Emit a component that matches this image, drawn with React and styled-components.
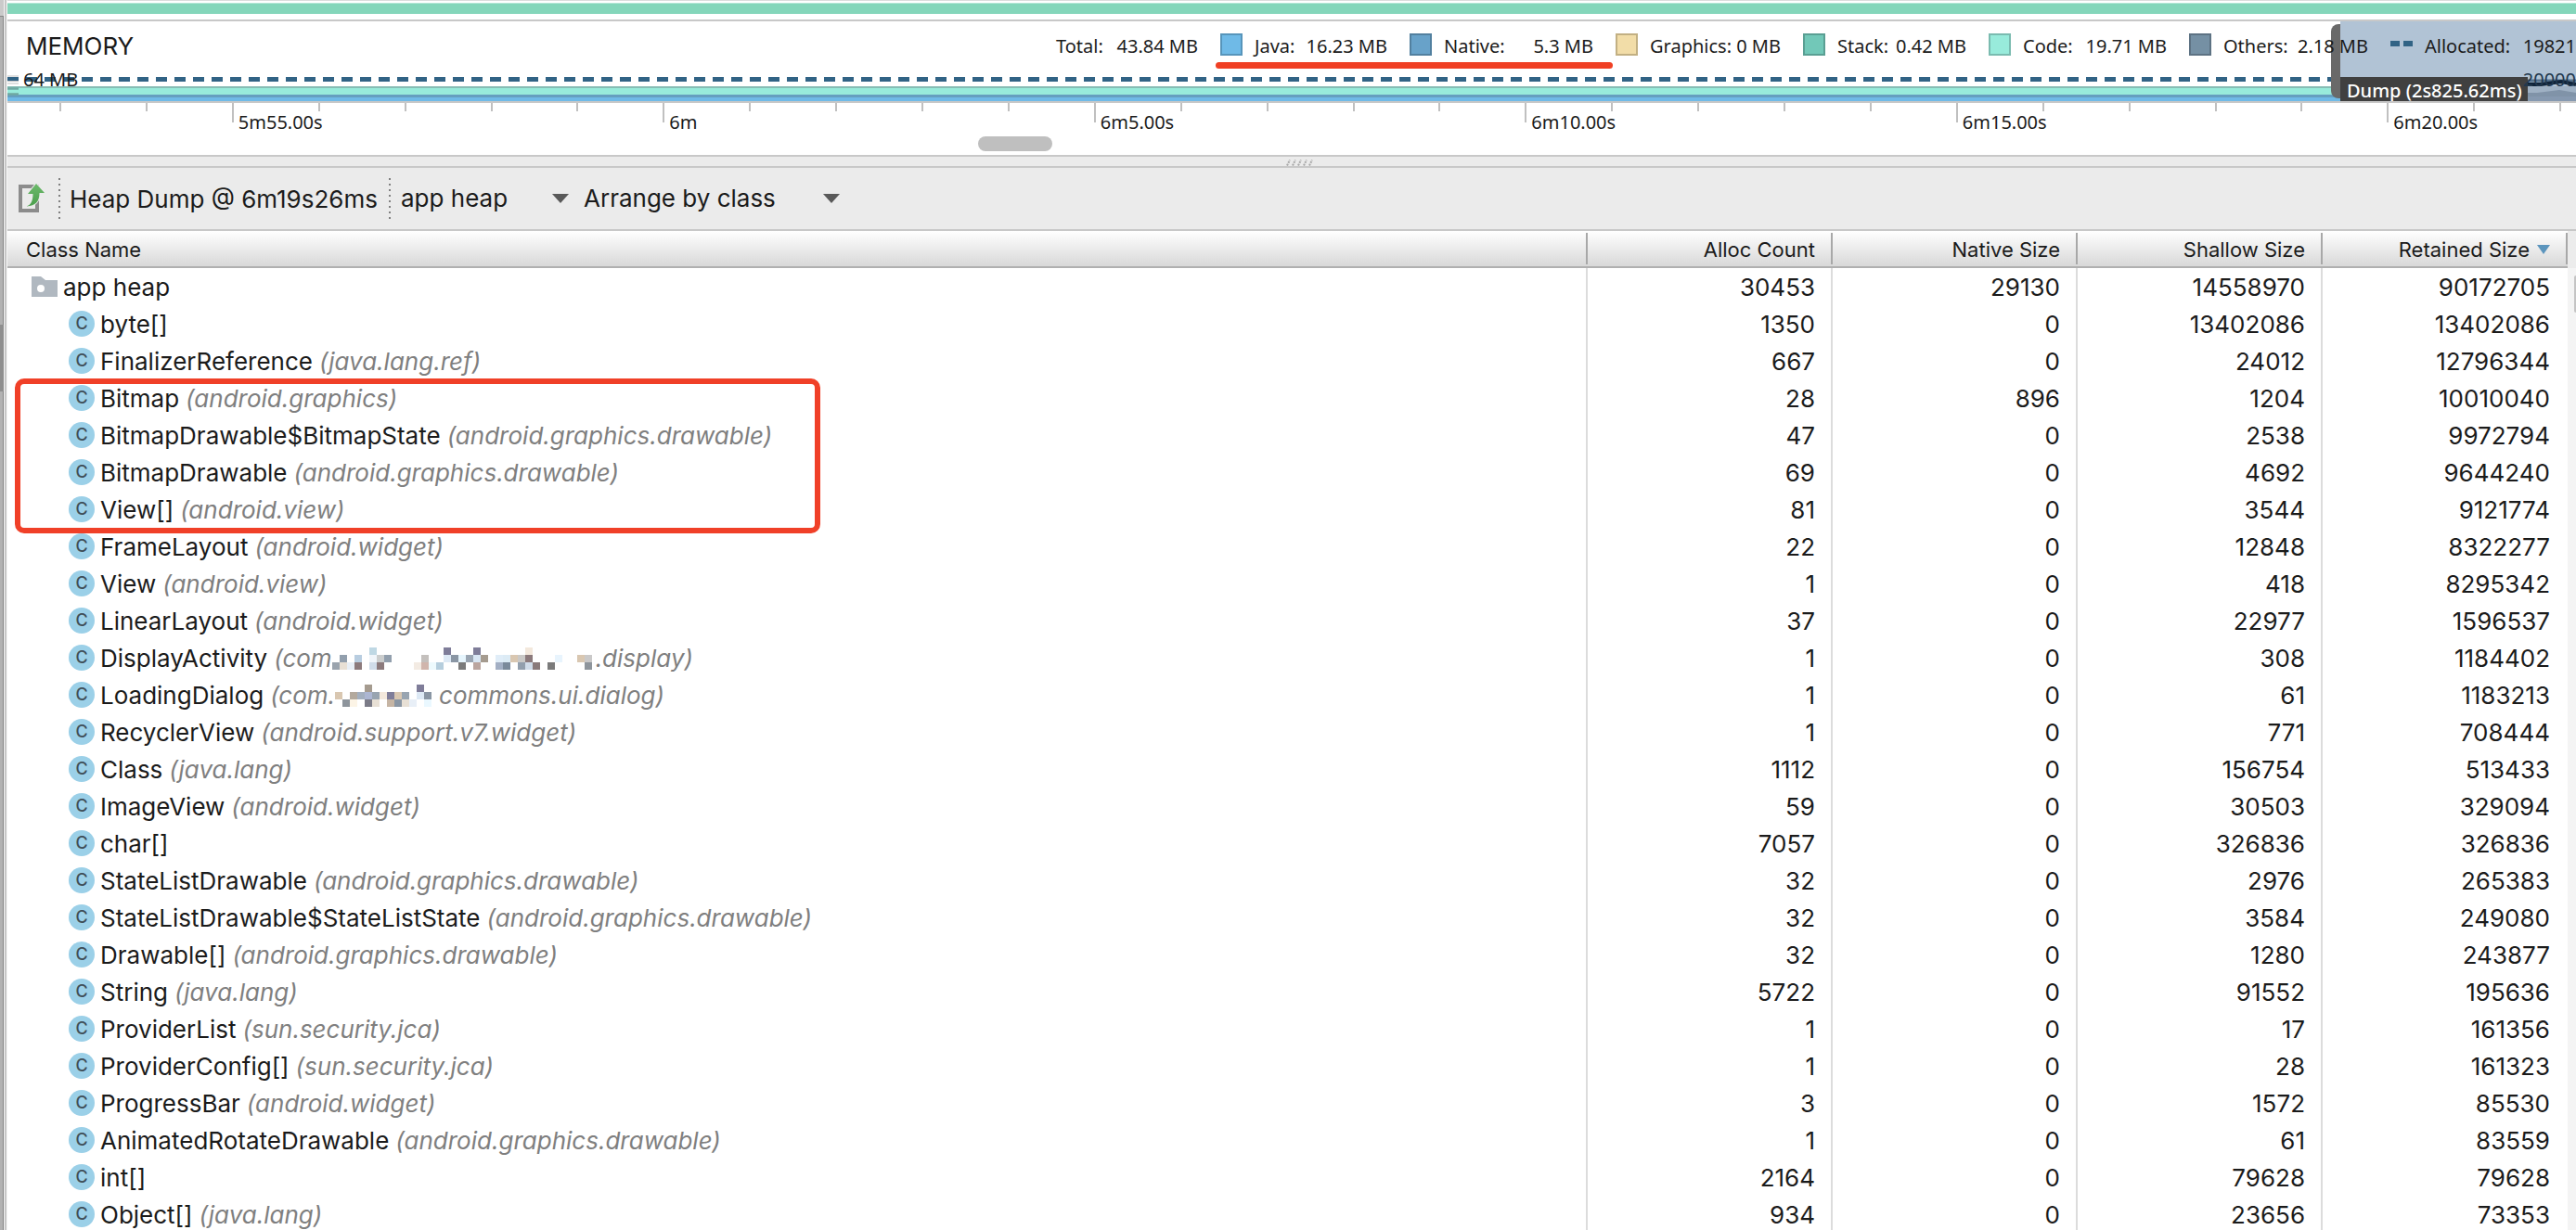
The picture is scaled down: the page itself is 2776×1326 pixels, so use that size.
import React from "react";
import styled, { createGlobalStyle } from "styled-components";

const GlobalStyle = createGlobalStyle`
  * { box-sizing: border-box; }
  body {
    margin: 0;
    overflow: hidden;
    background: #ffffff;
    color: #1b1b1b;
    font-family: Inter, "Liberation Sans", sans-serif;
    font-size: 26px;
  }
`;

const chartFont = `"Noto Sans", "Open Sans", sans-serif`;

const Page = styled.div`
  display: flex;
  height: 100vh;
  overflow: hidden;
`;

const Gutter = styled.aside`
  flex: 0 0 8px;
  display: flex;
  flex-direction: column;
  background: linear-gradient(to right, #b2b2b2 0 3px, #858585 3px 4px, #f2f2f2 4px 5px, #c6c6c6 5px 7px, #f6f6f6 7px 8px);
`;

const GutterPart = styled.div`
  width: 4px;
  height: ${(p) => p.$height}px;
  background: ${(p) => p.$color};
`;

const Main = styled.main`
  flex: 1;
  min-width: 0;
  display: flex;
  flex-direction: column;
`;

const NetworkStrip = styled.div`
  height: 23px;
  flex: none;
  padding-top: 2px;
  border-top: 1px solid #dcdcdc;
  border-bottom: 2px solid #c8c8c8;
`;

const NetworkBand = styled.div`
  height: 12px;
  background: #84d6ba;
  border-top: 1px solid #b4e6d6;
`;

const MemoryPanel = styled.section`
  position: relative;
  flex: none;
  overflow: hidden;
  border-bottom: 2px solid #c8c8c8;
`;

const MemoryHeader = styled.header`
  position: relative;
  z-index: 2;
  display: flex;
  align-items: center;
  justify-content: space-between;
  height: 52px;
  padding: 2px 0 0 20px;
`;

const Title = styled.h1`
  margin: 0;
  font-size: 26px;
  line-height: 32px;
  font-weight: 400;
`;

const Legend = styled.ul`
  display: flex;
  flex: 0 0 1638px;
  margin: 0;
  padding: 0;
  list-style: none;
  white-space: nowrap;
  font-family: ${chartFont};
  font-size: 20px;
  line-height: 28px;
`;

const LegendItem = styled.li`
  flex: 0 0 ${(p) => p.$width}px;
  display: flex;
  align-items: center;
  justify-content: space-between;
  padding-right: ${(p) => (p.$last ? 0 : 24)}px;
`;

const LegendLabel = styled.span`
  display: flex;
  align-items: center;
  gap: 13px;
`;

const Swatch = styled.span`
  width: 24px;
  height: 24px;
  margin-bottom: 4px;
  background: ${(p) => p.$fill};
  border: 2px solid ${(p) => p.$edge};
`;

const DashSwatch = styled.span`
  width: 24px;
  height: 6px;
  margin-bottom: 6px;
  background: linear-gradient(to right, #316385 0 10px, transparent 10px 14px, #316385 14px 24px);
`;

const Underline = styled.div`
  position: absolute;
  z-index: 2;
  top: 44px;
  right: 1038px;
  width: 428px;
  height: 7px;
  border-radius: 4px;
  background: #f04024;
`;

const AllocatedLine = styled.div`
  height: 5px;
  margin: 8px 0 5px;
  background: repeating-linear-gradient(to right, #316385 0 12px, transparent 12px 20px);
`;

const CodeBand = styled.div`
  height: 9px;
  background: #98ebdb;
  border-top: 2px solid #86bdb5;
`;

const JavaBand = styled.div`
  height: 7px;
  background: #6fbae7;
  border-top: 3px solid #659fbf;
`;

const AxisMarks = styled.svg`
  position: absolute;
  left: 0;
  bottom: 0;
  width: 12px;
  height: 28px;
`;

const AxisLabel = styled.span`
  position: absolute;
  z-index: 2;
  bottom: 10px;
  ${(p) => (p.$end ? "right: 0; color: #22384e;" : "left: 17px;")}
  font-family: ${chartFont};
  font-size: 20px;
  line-height: 26px;
`;

const Selection = styled.div`
  position: absolute;
  top: 0;
  right: 0;
  bottom: 0;
  width: 254px;
  display: flex;
  align-items: flex-end;
  background: #b1c3d5;
`;

const Handle = styled.div`
  position: absolute;
  top: 3px;
  left: -10px;
  width: 10px;
  height: 80px;
  border-radius: 8px 0 0 8px;
  background: #696969;
`;

const DumpTag = styled.div`
  width: 202px;
  height: 26px;
  padding-left: 7px;
  background: #404040;
  color: #ffffff;
  font-family: ${chartFont};
  font-size: 20px;
  font-weight: 500;
  line-height: 30px;
  white-space: nowrap;
`;

const Ruler = styled.div`
  display: grid;
  flex: none;
  grid-template-columns: 560fr repeat(29, minmax(0, 929fr)) 179fr;
  height: 34px;
`;

const Tick = styled.div`
  grid-column-start: ${(p) => p.$column};
  height: ${(p) => (p.$major ? 21 : 9)}px;
  padding: 8px 0 0 5px;
  border-left: 2px solid #c0c0c0;
  font-family: ${chartFont};
  font-size: 20px;
  line-height: 26px;
  white-space: nowrap;
`;

const ScrollTrack = styled.div`
  flex: none;
  height: 24px;
  padding: 2px 0 0 1046px;
  border-bottom: 2px solid #c8c8c8;
`;

const ScrollThumb = styled.div`
  width: 80px;
  height: 16px;
  border-radius: 8px;
  background: #bfbfbf;
`;

const Splitter = styled.div`
  flex: none;
  display: flex;
  justify-content: center;
  height: 12px;
  padding: 3px 0 0 18px;
  background: #ebebeb;
  border-bottom: 2px solid #c8c8c8;
`;

const Toolbar = styled.div`
  flex: none;
  display: flex;
  align-items: center;
  height: 68px;
  padding-left: 12px;
  background: #ebebeb;
  border-bottom: 2px solid #c8c8c8;
  font-size: 26px;
  white-space: nowrap;
`;

const IconButton = styled.button`
  display: flex;
  width: 43px;
  padding: 0;
  border: 0;
  background: none;
`;

const Divider = styled.span`
  width: 2px;
  height: 44px;
  background: repeating-linear-gradient(to bottom, #808080 0 2px, transparent 2px 6px);
`;

const DumpName = styled.span`
  width: 354px;
  padding-left: 10px;
`;

const Picker = styled.label`
  display: flex;
  align-items: center;
  width: ${(p) => p.$width}px;
  margin-left: ${(p) => p.$gap}px;
`;

const PickerSelect = styled.select`
  flex: 1;
  min-width: 0;
  padding: 0;
  border: 0;
  appearance: none;
  background: none;
  color: inherit;
  font: inherit;
  line-height: 34px;
`;

const TableArea = styled.div`
  position: relative;
  flex: 1;
  min-height: 0;
  display: flex;
  overflow: hidden;
`;

const ClassTable = styled.table`
  flex: 1;
  width: 100%;
  table-layout: fixed;
  border-collapse: separate;
  border-spacing: 0;
  height: max-content;
`;

const NameCol = styled.col``;

const NumberCol = styled.col`
  width: 264px;
`;

const HeadCell = styled.th`
  height: 40px;
  padding: 2px 19px 0 20px;
  font-size: 22px;
  font-weight: 400;
  line-height: 28px;
  text-align: ${(p) => (p.$numeric ? "right" : "left")};
  white-space: nowrap;
  border-bottom: 2px solid #b0b0b0;
  background:
    linear-gradient(#a8a8a8, #a8a8a8) right 2px / 2px 34px no-repeat,
    linear-gradient(to bottom, #ffffff, #d8d8d8);
`;

const SortArrow = styled.svg`
  width: 14px;
  height: 10px;
  margin-left: 8px;
  vertical-align: 3px;
`;

const NameCell = styled.td`
  height: 40px;
  padding: 0 0 0 ${(p) => (p.$root ? 26 : 66)}px;
  border-right: 2px solid #dcdcdc;
`;

const NameLine = styled.div`
  display: flex;
  align-items: center;
  gap: 6px;
  height: 40px;
  line-height: 32px;
  font-size: 26px;
  white-space: nowrap;
`;

const ClassName = styled.span`
  padding-top: 1px;
`;

const PackageName = styled.em`
  display: flex;
  align-items: center;
  padding: 1px 0 0 1px;
  color: #7f7f7f;
`;

const ClassBadge = styled.span`
  display: grid;
  place-items: center;
  width: 28px;
  height: 28px;
  border-radius: 50%;
  background: #9bd0e8;
  color: #3f4f58;
  font-size: 18px;
  font-weight: 500;
  line-height: 28px;
`;

const NumberCell = styled.td`
  height: 40px;
  padding: 1px ${(p) => (p.$last ? 19 : 17)}px 0 0;
  border-right: ${(p) => (p.$last ? "0" : "2px solid #dcdcdc")};
  text-align: right;
  font-size: 26px;
  line-height: 32px;
`;

const SideTrack = styled.div`
  flex: 0 0 9px;
  display: flex;
  justify-content: flex-end;
  padding-top: 48px;
  background: linear-gradient(to bottom, #ececec 0 40px, #f4f4f4 40px);
`;

const SideThumb = styled.div`
  width: 2px;
  height: 40px;
  border-radius: 2px 0 0 2px;
  background: #c4c4c4;
`;

const Highlight = styled.div`
  position: absolute;
  top: 159px;
  left: 8px;
  width: 868px;
  height: 167px;
  border: 6px solid #f04028;
  border-radius: 10px;
  pointer-events: none;
`;

const legend = [
  { label: "Total:", value: "43.84 MB", width: 177 },
  { label: "Java:", value: "16.23 MB", width: 204, fill: "#6fbae7", edge: "#5795bb" },
  { label: "Native:", value: "5.3 MB", width: 222, fill: "#68a2c9", edge: "#52809f" },
  { label: "Graphics:", value: "0 MB", width: 202, fill: "#f2dda8", edge: "#c2b083" },
  { label: "Stack:", value: "0.42 MB", width: 200, fill: "#72c8b8", edge: "#5a9f93" },
  { label: "Code:", value: "19.71 MB", width: 216, fill: "#98ebdb", edge: "#7abbb0" },
  { label: "Others:", value: "2.18 MB", width: 217, fill: "#7590a4", edge: "#5d7283" },
  { label: "Allocated:", value: "19821", width: 200, dashed: true },
];

const tickLabels = { 2: "5m55.00s", 7: "6m", 12: "6m5.00s", 17: "6m10.00s", 22: "6m15.00s", 27: "6m20.00s" };
const ticks = Array.from({ length: 30 }, (_, i) => i);

// Redacted parts of package names: [column, row, colour] on an 8px grid.
const maskActivity = {
  width: 284,
  cells: [
    [5, 0, "#bfd8e4"], [15, 0, "#7f7d99"], [19, 0, "#7f7d99"], [26, 0, "#f3e8dc"],
    [1, 1, "#929fad"], [3, 1, "#b8cde0"], [5, 1, "#f0f5fa"], [6, 1, "#cbcdcd"], [7, 1, "#929fad"], [12, 1, "#c4c0bd"],
    [15, 1, "#dde9f5"], [16, 1, "#8a96a4"], [17, 1, "#e6f5fd"], [18, 1, "#9aa5b2"], [19, 1, "#d8e6f3"], [20, 1, "#a59b8f"],
    [22, 1, "#e0edf8"], [23, 1, "#dcebf5"], [24, 1, "#d9c7b1"], [25, 1, "#cac9c7"], [26, 1, "#8c7a7c"], [30, 1, "#e8f4fd"],
    [33, 1, "#d9c7b1"], [34, 1, "#cac9c9"],
    [0, 2, "#9aa4ae"], [1, 2, "#e8e0d5"], [2, 2, "#e8eff7"], [3, 2, "#8c7a7c"], [5, 2, "#d0dce9"], [6, 2, "#8c7a7c"],
    [11, 2, "#f3ebe3"], [12, 2, "#d0b5ac"], [13, 2, "#eefafd"], [14, 2, "#b6cedd"], [17, 2, "#7b7b7b"], [19, 2, "#bba59e"],
    [22, 2, "#a3afc4"], [23, 2, "#7b8a9b"], [25, 2, "#929fad"], [26, 2, "#d0dce9"], [27, 2, "#8a7a7a"], [29, 2, "#7b7b7b"],
    [34, 2, "#8e959c"],
  ],
};
const maskDialog = {
  width: 112,
  cells: [
    [4, 0, "#a59b8f"], [11, 0, "#7f7d99"],
    [0, 1, "#d9c7b1"], [2, 1, "#b3a99d"], [3, 1, "#a3afbf"], [4, 1, "#acb6d2"], [5, 1, "#98a4b0"], [6, 1, "#f3e8dc"],
    [7, 1, "#7f7d99"], [8, 1, "#d9c7b1"], [9, 1, "#98a4b0"], [11, 1, "#dde9f5"], [12, 1, "#8a96a4"],
    [1, 2, "#8e959c"], [2, 2, "#fcf4e6"], [4, 2, "#7b7b87"], [5, 2, "#e8e0d5"], [7, 2, "#c6b5a4"], [8, 2, "#8a96a4"],
    [9, 2, "#e8e0d5"], [10, 2, "#e8eff7"], [12, 2, "#eaf8ff"],
  ],
};

const rows = [
  ["byte[]", null, 1350, 0, 13402086, 13402086],
  ["FinalizerReference", "(java.lang.ref)", 667, 0, 24012, 12796344],
  ["Bitmap", "(android.graphics)", 28, 896, 1204, 10010040],
  ["BitmapDrawable$BitmapState", "(android.graphics.drawable)", 47, 0, 2538, 9972794],
  ["BitmapDrawable", "(android.graphics.drawable)", 69, 0, 4692, 9644240],
  ["View[]", "(android.view)", 81, 0, 3544, 9121774],
  ["FrameLayout", "(android.widget)", 22, 0, 12848, 8322277],
  ["View", "(android.view)", 1, 0, 418, 8295342],
  ["LinearLayout", "(android.widget)", 37, 0, 22977, 1596537],
  ["DisplayActivity", ["(com", maskActivity, ".display)"], 1, 0, 308, 1184402],
  ["LoadingDialog", ["(com.", maskDialog, "commons.ui.dialog)"], 1, 0, 61, 1183213],
  ["RecyclerView", "(android.support.v7.widget)", 1, 0, 771, 708444],
  ["Class", "(java.lang)", 1112, 0, 156754, 513433],
  ["ImageView", "(android.widget)", 59, 0, 30503, 329094],
  ["char[]", null, 7057, 0, 326836, 326836],
  ["StateListDrawable", "(android.graphics.drawable)", 32, 0, 2976, 265383],
  ["StateListDrawable$StateListState", "(android.graphics.drawable)", 32, 0, 3584, 249080],
  ["Drawable[]", "(android.graphics.drawable)", 32, 0, 1280, 243877],
  ["String", "(java.lang)", 5722, 0, 91552, 195636],
  ["ProviderList", "(sun.security.jca)", 1, 0, 17, 161356],
  ["ProviderConfig[]", "(sun.security.jca)", 1, 0, 28, 161323],
  ["ProgressBar", "(android.widget)", 3, 0, 1572, 85530],
  ["AnimatedRotateDrawable", "(android.graphics.drawable)", 1, 0, 61, 83559],
  ["int[]", null, 2164, 0, 79628, 79628],
  ["Object[]", "(java.lang)", 934, 0, 23656, 73353],
];

function Mask({ mask }) {
  return (
    <svg width={mask.width} height="24" aria-hidden="true" shapeRendering="crispEdges">
      {mask.cells.map(([x, y, fill]) => (
        <rect key={`${x}-${y}`} x={x * 8} y={y * 8} width="8" height="8" fill={fill} />
      ))}
    </svg>
  );
}

function Package({ value }) {
  if (!value) return null;
  if (typeof value === "string") return <PackageName>{value}</PackageName>;
  const [before, mask, after] = value;
  return (
    <PackageName>
      {before}
      <Mask mask={mask} />
      {after}
    </PackageName>
  );
}

function Numbers({ values }) {
  return values.map((value, i) => (
    <NumberCell key={i} $last={i === values.length - 1}>{value}</NumberCell>
  ));
}

function DownArrow() {
  return (
    <svg width="18" height="10" viewBox="0 0 18 10" aria-hidden="true">
      <path d="M0 0h18L9 10z" fill="#595959" />
    </svg>
  );
}

function ExportIcon() {
  return (
    <svg width="28" height="34" viewBox="0 0 28 34" aria-hidden="true">
      <defs>
        <linearGradient id="arrowFill" x1="0" y1="0" x2="0" y2="1">
          <stop offset="0" stopColor="#6dba6c" />
          <stop offset="1" stopColor="#4b9e4c" />
        </linearGradient>
      </defs>
      <path d="M2 4h18v26H2z" fill="none" stroke="#8c8c8c" strokeWidth="4" />
      <path d="M8.500 25.500C13 24 15.500 20 15.500 12H10L19 1l9 10h-5.500c0 9-4 14-14 14.500z" fill="url(#arrowFill)" stroke="#ebebeb" strokeWidth="2" paintOrder="stroke" />
    </svg>
  );
}

function FolderIcon() {
  return (
    <svg width="28" height="22" viewBox="0 0 28 22" aria-hidden="true">
      <path fillRule="evenodd" d="M0 0h10l5 4h13v18H0zM10 9a4 4 0 1 0 0 8a4 4 0 1 0 0-8z" fill="#b0b8c0" />
    </svg>
  );
}

function MemoryChart() {
  return (
    <MemoryPanel>
      <MemoryHeader>
        <Title>MEMORY</Title>
        <Legend>
          {legend.map((item) => (
            <LegendItem key={item.label} $width={item.width} $last={item.dashed}>
              <LegendLabel>
                {item.fill && <Swatch $fill={item.fill} $edge={item.edge} />}
                {item.dashed && <DashSwatch />}
                {item.label}
              </LegendLabel>
              <span>{item.value}</span>
            </LegendItem>
          ))}
        </Legend>
      </MemoryHeader>
      <AllocatedLine />
      <CodeBand />
      <JavaBand />
      <AxisMarks viewBox="0 0 12 28" aria-hidden="true">
        <path d="M0 1h12M0 6.500h12M0 9h12" stroke="#c0c0c0" />
        <path d="M0 14.500h12M0 20.500h12" stroke="#6fa9a2" strokeWidth="2.500" />
      </AxisMarks>
      <Underline />
      <Selection>
        <Handle />
        <DumpTag>Dump (2s825.62ms)</DumpTag>
        <svg width="52" height="26" viewBox="0 0 52 26" aria-hidden="true">
          <path d="M0 10h52v16H0z" fill="#9fb1c4" />
          <path d="M0 17h10l24-3 18 3v9H0z" fill="#8093a8" />
          <path d="M0 21h52v5H0z" fill="#8699b0" />
          <path d="M0 4h52" stroke="#55718c" strokeWidth="3" />
          <path d="M0 8h14l22-3 16 3" fill="none" stroke="#10243a" strokeWidth="4" />
        </svg>
      </Selection>
      <AxisLabel>64 MB</AxisLabel>
      <AxisLabel $end>20000</AxisLabel>
    </MemoryPanel>
  );
}

function SplitGrip() {
  return (
    <svg width="30" height="7" viewBox="0 0 30 7" aria-hidden="true">
      {[0, 1, 2, 3, 4].map((i) => (
        <path key={i} d={`M${i * 6 + 1} 6.500l3-6`} stroke="#a8a8a8" strokeWidth="2" strokeDasharray="2 1" />
      ))}
    </svg>
  );
}

export default function App() {
  return (
    <Page>
      <GlobalStyle />
      <Gutter>
        <GutterPart $height={17} $color="#cacaca" />
        <GutterPart $height={1} $color="#858585" />
        <GutterPart $height={332} $color="transparent" />
        <GutterPart $height={72} $color="#8f8f8f" />
      </Gutter>
      <Main>
        <NetworkStrip>
          <NetworkBand />
        </NetworkStrip>
        <MemoryChart />
        <Ruler>
          {ticks.map((i) => (
            <Tick key={i} $column={i + 2} $major={Boolean(tickLabels[i])}>{tickLabels[i]}</Tick>
          ))}
        </Ruler>
        <ScrollTrack>
          <ScrollThumb />
        </ScrollTrack>
        <Splitter>
          <SplitGrip />
        </Splitter>
        <Toolbar>
          <IconButton type="button" aria-label="Export heap dump">
            <ExportIcon />
          </IconButton>
          <Divider />
          <DumpName>Heap Dump @ 6m19s26ms</DumpName>
          <Divider />
          <Picker $width={181} $gap={11}>
            <PickerSelect aria-label="Heap" defaultValue="app">
              <option value="app">app heap</option>
            </PickerSelect>
            <DownArrow />
          </Picker>
          <Picker $width={276} $gap={16}>
            <PickerSelect aria-label="Arrangement" defaultValue="class">
              <option value="class">Arrange by class</option>
            </PickerSelect>
            <DownArrow />
          </Picker>
        </Toolbar>
        <TableArea>
          <ClassTable>
            <colgroup>
              <NameCol />
              <NumberCol />
              <NumberCol />
              <NumberCol />
              <NumberCol />
            </colgroup>
            <thead>
              <tr>
                <HeadCell>Class Name</HeadCell>
                <HeadCell $numeric>Alloc Count</HeadCell>
                <HeadCell $numeric>Native Size</HeadCell>
                <HeadCell $numeric>Shallow Size</HeadCell>
                <HeadCell $numeric>
                  Retained Size
                  <SortArrow viewBox="0 0 14 10" aria-hidden="true">
                    <path d="M0 0h14L7 10z" fill="#5c95bd" />
                  </SortArrow>
                </HeadCell>
              </tr>
            </thead>
            <tbody>
              <tr>
                <NameCell $root>
                  <NameLine>
                    <FolderIcon />
                    <ClassName>app heap</ClassName>
                  </NameLine>
                </NameCell>
                <Numbers values={[30453, 29130, 14558970, 90172705]} />
              </tr>
              {rows.map(([name, pkg, ...values]) => (
                <tr key={name}>
                  <NameCell>
                    <NameLine>
                      <ClassBadge>C</ClassBadge>
                      <ClassName>{name}</ClassName>
                      <Package value={pkg} />
                    </NameLine>
                  </NameCell>
                  <Numbers values={values} />
                </tr>
              ))}
            </tbody>
          </ClassTable>
          <SideTrack>
            <SideThumb />
          </SideTrack>
          <Highlight />
        </TableArea>
      </Main>
    </Page>
  );
}
